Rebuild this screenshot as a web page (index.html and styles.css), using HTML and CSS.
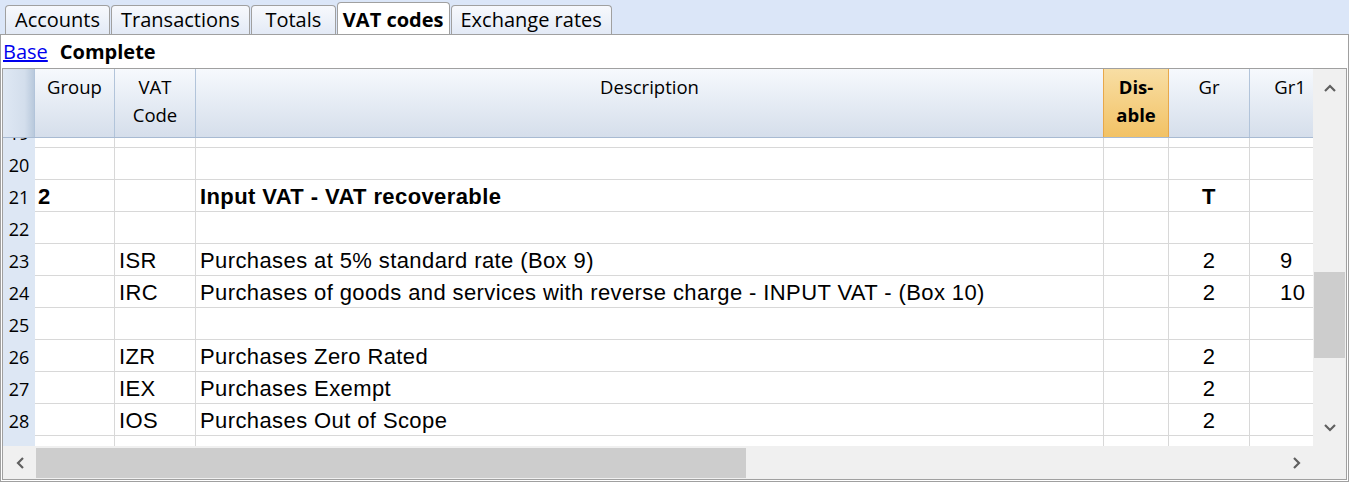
FILE: index.html
```html
<!DOCTYPE html>
<html>
<head>
<meta charset="utf-8">
<link rel="stylesheet" href="styles.css">
</head>
<body>
<div class="tabbar">
  <div class="tab">Accounts</div>
  <div class="tab">Transactions</div>
  <div class="tab">Totals</div>
  <div class="tab active">VAT codes</div>
  <div class="tab">Exchange rates</div>
</div>
<div class="panel">
  <div class="views">
    <a class="view-link" href="#">Base</a>
    <span class="view-current">Complete</span>
  </div>
  <div class="table">
    <div class="grid">
      <div class="row head">
        <div class="hc rn"></div>
        <div class="hc">Group</div>
        <div class="hc">VAT<br>Code</div>
        <div class="hc">Description</div>
        <div class="hc sel">Dis-<br>able</div>
        <div class="hc">Gr</div>
        <div class="hc">Gr1</div>
      </div>
      <div class="body">
        <div class="rows">
          <div class="row"><div class="c rn">19</div><div class="c"></div><div class="c"></div><div class="c"></div><div class="c"></div><div class="c"></div><div class="c"></div></div>
          <div class="row"><div class="c rn">20</div><div class="c"></div><div class="c"></div><div class="c"></div><div class="c"></div><div class="c"></div><div class="c"></div></div>
          <div class="row bold"><div class="c rn">21</div><div class="c">2</div><div class="c"></div><div class="c">Input VAT - VAT recoverable</div><div class="c"></div><div class="c mid">T</div><div class="c"></div></div>
          <div class="row"><div class="c rn">22</div><div class="c"></div><div class="c"></div><div class="c"></div><div class="c"></div><div class="c"></div><div class="c"></div></div>
          <div class="row"><div class="c rn">23</div><div class="c"></div><div class="c">ISR</div><div class="c">Purchases at 5% standard rate (Box 9)</div><div class="c"></div><div class="c mid">2</div><div class="c g1">9</div></div>
          <div class="row"><div class="c rn">24</div><div class="c"></div><div class="c">IRC</div><div class="c">Purchases of goods and services with reverse charge - INPUT VAT - (Box 10)</div><div class="c"></div><div class="c mid">2</div><div class="c g1">10</div></div>
          <div class="row"><div class="c rn">25</div><div class="c"></div><div class="c"></div><div class="c"></div><div class="c"></div><div class="c"></div><div class="c"></div></div>
          <div class="row"><div class="c rn">26</div><div class="c"></div><div class="c">IZR</div><div class="c">Purchases Zero Rated</div><div class="c"></div><div class="c mid">2</div><div class="c"></div></div>
          <div class="row"><div class="c rn">27</div><div class="c"></div><div class="c">IEX</div><div class="c">Purchases Exempt</div><div class="c"></div><div class="c mid">2</div><div class="c"></div></div>
          <div class="row"><div class="c rn">28</div><div class="c"></div><div class="c">IOS</div><div class="c">Purchases Out of Scope</div><div class="c"></div><div class="c mid">2</div><div class="c"></div></div>
          <div class="row"><div class="c rn">29</div><div class="c"></div><div class="c"></div><div class="c"></div><div class="c"></div><div class="c"></div><div class="c"></div></div>
        </div>
      </div>
    </div>
    <div class="vscroll">
      <div class="arrow">
        <svg width="12" height="8" viewBox="0 0 12 8"><path d="M1 7 L6 2 L11 7" fill="none" stroke="#606060" stroke-width="2.2"/></svg>
      </div>
      <div class="vtrack"><div class="vthumb"></div></div>
      <div class="arrow">
        <svg width="12" height="8" viewBox="0 0 12 8"><path d="M1 1 L6 6 L11 1" fill="none" stroke="#606060" stroke-width="2.2"/></svg>
      </div>
    </div>
    <div class="hscroll">
      <div class="harrow">
        <svg width="8" height="12" viewBox="0 0 8 12"><path d="M7 1 L2 6 L7 11" fill="none" stroke="#606060" stroke-width="2.2"/></svg>
      </div>
      <div class="htrack"><div class="hthumb"></div></div>
      <div class="harrow">
        <svg width="8" height="12" viewBox="0 0 8 12"><path d="M1 1 L6 6 L1 11" fill="none" stroke="#606060" stroke-width="2.2"/></svg>
      </div>
    </div>
    <div class="corner"></div>
  </div>
</div>
</body>
</html>
```
FILE: styles.css
```css
* { box-sizing: border-box; }
html, body { margin: 0; padding: 0; }
body {
  width: 1349px;
  height: 482px;
  overflow: hidden;
  background: #ffffff;
  font-family: "Open Sans", "Noto Sans", sans-serif;
  color: #000;
}
.tabbar {
  height: 34px;
  background: #dbe6f8;
  display: flex;
  align-items: flex-end;
  padding-left: 5px;
  gap: 1px;
}
.tab {
  height: 29px;
  min-width: 85px;
  text-align: center;
  border: 1px solid #a0a0a0;
  border-bottom: none;
  border-radius: 4px 4px 0 0;
  background: linear-gradient(#f7f9fd, #e3eaf6);
  padding: 1px 9px 0 9px;
  font-size: 20px;
  line-height: 26px;
  white-space: nowrap;
}
.tab.active {
  height: 32px;
  background: #ffffff;
  font-weight: bold;
  padding: 4px 5px 0 5px;
}
.panel {
  height: 448px;
  border: 1px solid #a0a0a0;
  display: flex;
  flex-direction: column;
}
.views {
  height: 33px;
  padding-left: 2px;
  display: flex;
  align-items: center;
  gap: 12px;
  font-size: 20px;
}
.view-link { color: #0000ee; text-decoration: underline; }
.view-current { font-weight: bold; }
.table {
  flex: 1;
  margin: 0 1px 1px 1px;
  border: 1px solid #a0a0a0;
  display: grid;
  grid-template-columns: 1fr 33px;
  grid-template-rows: 1fr 33px;
  overflow: hidden;
}
.grid {
  display: flex;
  flex-direction: column;
  overflow: hidden;
  min-width: 0;
  min-height: 0;
}
.row {
  display: grid;
  grid-template-columns: 32px 80px 81px 908px 65px 81px 81px;
  width: max-content;
}
.head {
  height: 69px;
  border-bottom: 1px solid #a8bad2;
  background: linear-gradient(#f6f9fd, #d5deeb);
  position: relative;
  z-index: 1;
}
.hc {
  border-right: 1px solid #b2c4da;
  text-align: center;
  font-size: 18.5px;
  line-height: 28px;
  padding-top: 4px;
}
.hc.rn {
  background: linear-gradient(90deg, #dfe8f4 0%, #d3deec 70%, #b9c9dc 100%);
  border-right: 1px solid #b2c4da;
}
.hc.sel {
  background: linear-gradient(#f8dea4, #f2c265);
  border-left: 1px solid #e8a84a;
  border-right: 1px solid #e8a84a;
  margin-left: -1px;
  font-weight: bold;
}
.body {
  flex: 1;
  overflow: hidden;
}
.rows { margin-top: -22px; }
.c {
  height: 32px;
  border-right: 1px solid #d8d8d8;
  border-bottom: 1px solid #d8d8d8;
  font-family: "Liberation Sans", Arial, sans-serif;
  font-size: 22px;
  letter-spacing: 0.4px;
  line-height: 28px;
  padding: 3px 0 0 4px;
  white-space: nowrap;
  overflow: hidden;
}
.c.rn {
  background: #dde7f4;
  border: none;
  font-family: "Open Sans", "Noto Sans", sans-serif;
  font-size: 18px;
  letter-spacing: 0;
  text-align: center;
  padding: 0;
  line-height: 35px;
}
.bold .c { font-weight: bold; }
.bold .c.rn { font-weight: normal; }
.row .c:nth-child(2) { padding-left: 3px; }
.c.mid { text-align: center; padding-left: 0; }
.c.g1 { padding-left: 30px; }
.vscroll {
  background: #f0f0f0;
  display: flex;
  flex-direction: column;
}
.arrow {
  height: 37px;
  display: flex;
  align-items: center;
  justify-content: center;
}
.vtrack { flex: 1; padding-top: 166px; }
.vthumb { height: 86px; background: #cdcdcd; margin: 0 1px; }
.hscroll {
  background: #f0f0f0;
  display: flex;
  align-items: stretch;
}
.harrow {
  width: 33px;
  display: flex;
  align-items: center;
  justify-content: center;
}
.htrack { flex: 1; padding: 2px 0 1px 0; }
.hthumb { width: 710px; height: 100%; background: #cdcdcd; }
.corner { background: #f0f0f0; }
```
